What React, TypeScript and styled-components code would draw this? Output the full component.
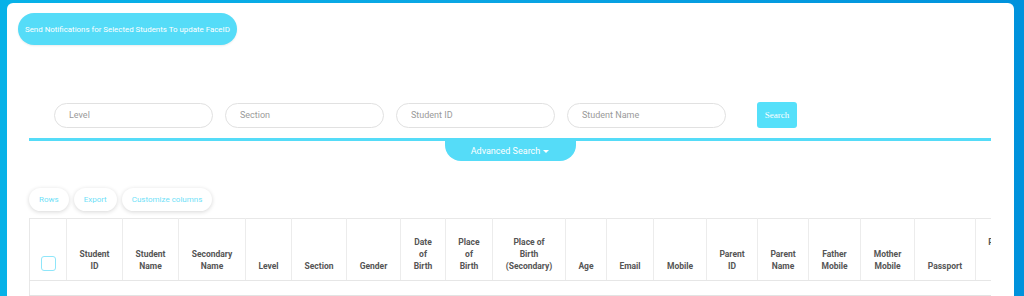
import React from 'react'
import styled, { createGlobalStyle } from 'styled-components'

const GlobalStyle = createGlobalStyle`
    html, body {
        margin: 0;
        padding: 0;
        height: 100%;
    }

    body {
        background: linear-gradient(to right, #07b2e8 0%, #0aa6e4 45%, #0092dc 100%);
        font-family: Roboto, "Liberation Sans", Arial, sans-serif;
        overflow: hidden;
    }
`

const filters = ['Level', 'Section', 'Student ID', 'Student Name']

const toolbar = ['Rows', 'Export', 'Customize columns']

const columns: { lines: string[]; width: number }[] = [
    { lines: ['Student', 'ID'], width: 56 },
    { lines: ['Student', 'Name'], width: 56 },
    { lines: ['Secondary', 'Name'], width: 67 },
    { lines: ['Level'], width: 46 },
    { lines: ['Section'], width: 55 },
    { lines: ['Gender'], width: 54 },
    { lines: ['Date', 'of', 'Birth'], width: 45 },
    { lines: ['Place', 'of', 'Birth'], width: 47 },
    { lines: ['Place of', 'Birth', '(Secondary)'], width: 73 },
    { lines: ['Age'], width: 41 },
    { lines: ['Email'], width: 47 },
    { lines: ['Mobile'], width: 53 },
    { lines: ['Parent', 'ID'], width: 51 },
    { lines: ['Parent', 'Name'], width: 51 },
    { lines: ['Father', 'Mobile'], width: 52 },
    { lines: ['Mother', 'Mobile'], width: 54 },
    { lines: ['Passport'], width: 61 },
    { lines: ['Passport', 'Expiry', 'Date'], width: 60 },
    { lines: ['Address'], width: 60 },
]

export default function App() {
    return (
        <>
            <GlobalStyle />
            <Card>
                <NotifyButton>Send Notifications for Selected Students To update FaceID</NotifyButton>

                <Content>
                    <SearchRow>
                        {filters.map(f => (
                            <FilterInput key={f} placeholder={f} />
                        ))}
                        <SearchButton>Search</SearchButton>
                    </SearchRow>

                    <Divider />
                    <TabHolder>
                        <AdvancedTab>
                            Advanced Search
                            <Caret />
                        </AdvancedTab>
                    </TabHolder>

                    <Toolbar>
                        {toolbar.map(t => (
                            <ToolButton key={t}>{t}</ToolButton>
                        ))}
                    </Toolbar>

                    <TableWrap>
                        <Table>
                            <thead>
                                <tr>
                                    <HeadCell width={37}>
                                        <CheckBox />
                                    </HeadCell>
                                    {columns.map((c, i) => (
                                        <HeadCell key={i} width={c.width}>
                                            {c.lines.map((l, j) => (
                                                <React.Fragment key={j}>
                                                    {j > 0 && <br />}
                                                    {l}
                                                </React.Fragment>
                                            ))}
                                        </HeadCell>
                                    ))}
                                </tr>
                            </thead>
                            <tbody>
                                <tr>
                                    <EmptyCell colSpan={columns.length + 1} />
                                </tr>
                            </tbody>
                        </Table>
                    </TableWrap>
                </Content>
            </Card>
        </>
    )
}

const Card = styled.div`
    margin: 3px 10px 0 7px;
    height: 320px;
    background: #ffffff;
    border-radius: 6px;
    padding: 10px 0 0 11px;
    box-sizing: border-box;
`

const NotifyButton = styled.button`
    display: block;
    height: 32px;
    padding: 0 7px;
    border: none;
    border-radius: 16px;
    background: #55dcf8;
    color: #ffffff;
    font-family: Roboto, "Liberation Sans", sans-serif;
    font-size: 7.9px;
    box-shadow: 0 1px 2px rgba(0, 0, 0, 0.08);
`

const Content = styled.div`
    margin: 57px 23px 0 11px;
`

const SearchRow = styled.div`
    display: flex;
    align-items: center;
    gap: 12px;
    padding-left: 25px;
    height: 26px;
`

const FilterInput = styled.input`
    width: 159px;
    height: 25px;
    box-sizing: border-box;
    border: 1px solid #e1e1e1;
    border-radius: 13px;
    padding: 0 14px;
    font-family: Roboto, "Liberation Sans", sans-serif;
    font-size: 9px;
    color: #555;
    outline: none;

    &::placeholder {
        color: #9a9a9a;
    }
`

const SearchButton = styled.button`
    margin-left: 19px;
    width: 40px;
    height: 26px;
    border: none;
    border-radius: 3px;
    background: #55e0fa;
    color: #ffffff;
    font-family: "Liberation Serif", serif;
    font-size: 9px;
    padding: 0;
`

const Divider = styled.div`
    margin-top: 10px;
    height: 3px;
    background: #55dcf8;
`

const TabHolder = styled.div`
    display: flex;
    justify-content: center;
`

const AdvancedTab = styled.div`
    width: 131px;
    height: 20px;
    display: flex;
    align-items: center;
    justify-content: center;
    gap: 3px;
    background: #55dcf8;
    border-radius: 0 0 16px 16px;
    color: #ffffff;
    font-size: 9px;
`

const Caret = styled.span`
    width: 0;
    height: 0;
    border-left: 3px solid transparent;
    border-right: 3px solid transparent;
    border-top: 3px solid #ffffff;
`

const Toolbar = styled.div`
    display: flex;
    gap: 5px;
    margin-top: 27px;
`

const ToolButton = styled.button`
    height: 23px;
    padding: 0 10px;
    border: none;
    border-radius: 12px;
    background: #ffffff;
    color: #6fdff8;
    font-family: Roboto, "Liberation Sans", sans-serif;
    font-size: 8px;
    box-shadow: 0 1px 4px rgba(0, 0, 0, 0.16);
`

const TableWrap = styled.div`
    margin-top: 7px;
    overflow: hidden;
`

const Table = styled.table`
    border-collapse: collapse;
    table-layout: fixed;
    border-top: 1px solid #e8e8e8;
    border-left: 1px solid #e8e8e8;
`

const HeadCell = styled.th<{ width: number }>`
    width: ${({ width }) => width}px;
    min-width: ${({ width }) => width}px;
    height: 62px;
    box-sizing: border-box;
    padding: 0 2px 8px;
    vertical-align: bottom;
    text-align: center;
    border-right: 1px solid #ececec;
    border-bottom: 1px solid #e6e6e6;
    font-size: 8.5px;
    line-height: 12px;
    font-weight: 700;
    color: #555555;
    white-space: nowrap;
`

const CheckBox = styled.div`
    width: 13px;
    height: 13px;
    margin: 0 auto 1px;
    border: 1px solid #8fe6fa;
    border-radius: 3px;
`

const EmptyCell = styled.td`
    height: 14px;
    padding: 0;
    border-bottom: 1px solid #e3e3e3;
`
